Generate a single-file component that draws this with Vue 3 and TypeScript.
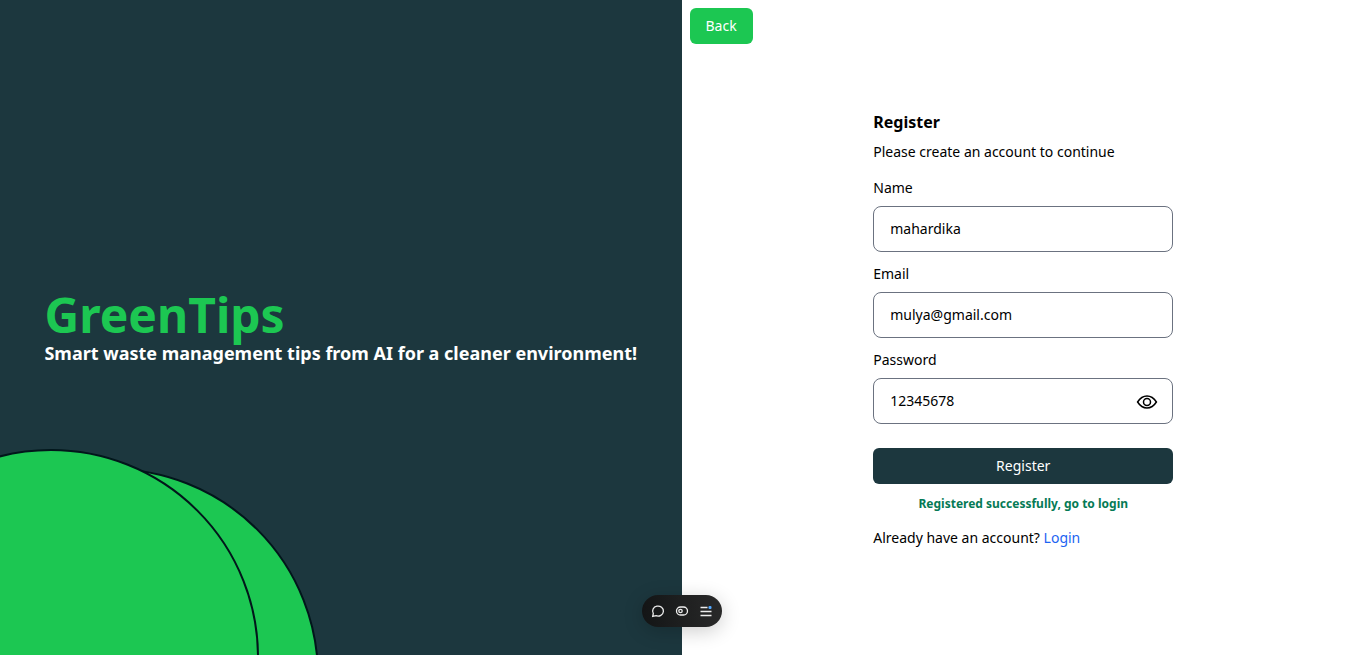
<script setup lang="ts">
import { ref } from 'vue'

const name = ref('mahardika')
const email = ref('mulya@gmail.com')
const password = ref('12345678')
const passwordVisible = ref(true)
const registered = ref(true)

function register(): void {
  registered.value = true
}
</script>

<template>
  <div class="page">
    <section class="brand">
      <svg class="circles" width="320" height="208" viewBox="0 0 320 208" aria-hidden="true">
        <circle cx="111" cy="229" r="207" />
        <circle cx="51" cy="210" r="207" />
      </svg>
      <div class="intro">
        <h1>GreenTips</h1>
        <p>Smart waste management tips from AI for a cleaner environment!</p>
      </div>
    </section>

    <main class="panel">
      <button class="button back" type="button">Back</button>
      <form class="form" @submit.prevent="register">
        <h2>Register</h2>
        <p class="lead">Please create an account to continue</p>

        <div class="field">
          <label for="name">Name</label>
          <input id="name" v-model="name" type="text" />
        </div>
        <div class="field">
          <label for="email">Email</label>
          <input id="email" v-model="email" type="email" />
        </div>
        <div class="field">
          <label for="password">Password</label>
          <div class="secret">
            <input id="password" v-model="password" :type="passwordVisible ? 'text' : 'password'" />
            <button class="eye" type="button" aria-label="Toggle password visibility" @click="passwordVisible = !passwordVisible">
              <svg width="24" height="24" viewBox="0 0 24 24" aria-hidden="true">
                <path d="M2.6 12C5 8.200 8.200 6 12 6S19 8.200 21.400 12C19 15.800 15.800 18 12 18S5 15.800 2.600 12Z" />
                <circle cx="12" cy="12" r="3.500" />
              </svg>
            </button>
          </div>
        </div>

        <button class="button submit" type="submit">Register</button>
        <p v-if="registered" class="success" role="status">Registered successfully, go to login</p>
        <p class="switch">Already have an account? <a href="#login">Login</a></p>
      </form>
    </main>

    <div class="toolbar" role="toolbar" aria-label="Page tools">
      <button type="button" aria-label="Comments">
        <svg width="16" height="16" viewBox="0 0 16 16" aria-hidden="true">
          <path d="M2.700 13.400 3.300 10.500A5.400 5 0 1 1 6 12.700Z" />
        </svg>
      </button>
      <button type="button" aria-label="Flags">
        <svg width="16" height="16" viewBox="0 0 16 16" aria-hidden="true">
          <rect x="2.500" y="4" width="11" height="8" rx="4" />
          <circle cx="6.500" cy="8" r="1.700" />
        </svg>
      </button>
      <button type="button" aria-label="Menu">
        <svg class="menu" width="16" height="16" viewBox="0 0 16 16" aria-hidden="true">
          <path d="M2.500 4.500H9.500M2.500 8.500H13.500M2.500 12.500H13.500" />
          <rect class="dot" x="10.500" y="3" width="3" height="3" rx="1" />
        </svg>
      </button>
    </div>
  </div>
</template>

<style>
body {
  margin: 0;
}
</style>

<style scoped>
.page {
  display: grid;
  grid-template-columns: calc(50% - 1px) 1fr;
  min-height: 100vh;
  background: #fff;
  color: #000;
  font-family: "Noto Sans", sans-serif;
  font-size: 14px;
  line-height: 20px;
}

h1,
h2,
p {
  margin: 0;
}

button,
input {
  box-sizing: border-box;
  font: inherit;
}

button {
  padding: 0;
  border: 0;
  cursor: pointer;
}

.brand,
.panel {
  position: relative;
  display: flex;
  align-items: center;
  justify-content: center;
  padding-top: 2px;
}

.brand {
  overflow: hidden;
  background: #1c373e;
}

.circles {
  position: absolute;
  bottom: 0;
  left: 0;
  fill: #1cc752;
  stroke: #02161b;
  stroke-width: 2;
}

.intro {
  position: relative;
  color: #fff;
}

.intro h1 {
  color: #1cc752;
  font-size: 48px;
  font-weight: 700;
  line-height: 48px;
}

.intro p {
  font-size: 18px;
  font-weight: 700;
  line-height: 28px;
}

.button {
  height: 36px;
  padding: 0 16px;
  border-radius: 6px;
  color: #fff;
}

.back {
  position: absolute;
  top: 8px;
  left: 8px;
  background: #1cc752;
}

.form {
  display: flex;
  flex-direction: column;
  width: 300px;
}

.form h2 {
  margin-bottom: 8px;
  font-size: 16px;
  font-weight: 700;
  line-height: 24px;
}

.lead {
  margin-bottom: 16px;
}

.field {
  display: flex;
  flex-direction: column;
  gap: 8px;
  margin-bottom: 12px;
}

.field input {
  width: 100%;
  height: 46px;
  padding: 12px 16px;
  border: 1px solid #6b7280;
  border-radius: 8px;
  background: #fff;
  color: #000;
  outline: 0;
}

.secret {
  position: relative;
}

.eye {
  position: absolute;
  top: 12px;
  right: 14px;
  width: 24px;
  height: 24px;
  background: transparent;
}

.eye svg {
  display: block;
  fill: none;
  stroke: #000;
  stroke-width: 1.5;
}

.submit {
  margin-top: 12px;
  background: #1c373e;
}

.success {
  margin: 12px 0 16px;
  color: #057a55;
  font-size: 12px;
  font-weight: 700;
  line-height: 16px;
  text-align: center;
}

.switch a {
  color: #1c64f2;
  text-decoration: none;
}

.toolbar {
  position: fixed;
  bottom: 28px;
  left: calc(50% - 41px);
  display: flex;
  align-items: center;
  justify-content: center;
  gap: 8px;
  width: 80px;
  height: 32px;
  border-radius: 16px;
  background: linear-gradient(90deg, #131516, #292929);
  box-shadow: 0 4px 20px rgba(0, 0, 0, 0.2);
}

.toolbar button {
  width: 16px;
  height: 16px;
  background: transparent;
}

.toolbar svg {
  display: block;
  fill: none;
  stroke: #ededed;
  stroke-width: 1.3;
}

.toolbar .dot {
  fill: #52a8ff;
  stroke: none;
}
</style>
